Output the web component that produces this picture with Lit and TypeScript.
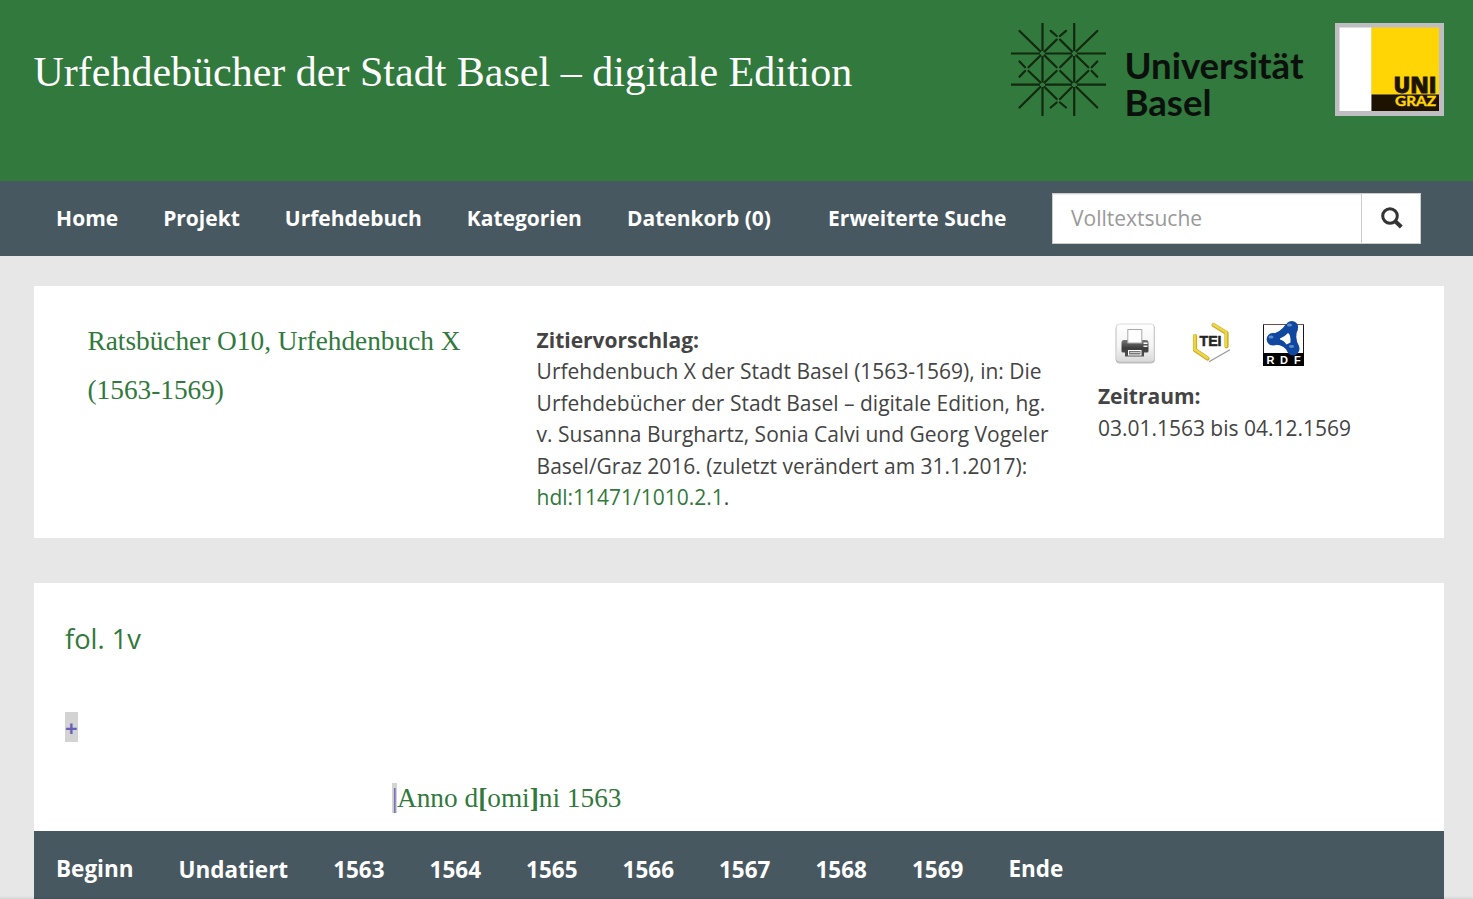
import { LitElement, html, css, svg } from "lit";
import { customElement } from "lit/decorators.js";

const mainNav = ["Home", "Projekt", "Urfehdebuch", "Kategorien", "Datenkorb (0)"];
const years = ["1563", "1564", "1565", "1566", "1567", "1568", "1569"];

@customElement("basel-logo")
class BaselLogo extends LitElement {
  static styles = css`
    :host { display: block; width: 294px; height: 93px; }
    svg { display: block; }
    .word { font: 700 35.500px "Lato", sans-serif; fill: #0b100c; }
  `;
  render() {
    return html`<svg width="294" height="93" viewBox="0 0 294 93">
      <g stroke="#12280f" stroke-width="2.2" fill="none">
        <path d="M31.500 0V28M31.500 33V59.500M31.500 64V93M63.200 0V28M63.200 33V59.500M63.200 64V93" />
        <path d="M0 30.500H29M34 30.500H61M66 30.500H95M0 61.700H29M34 61.700H61M66 61.700H95" />
        <g stroke-linecap="round">
          <path d="M8.500 8L29.300 28.300M86.300 8L65.300 28.300M8.500 84.500L29.300 64M86.300 84.500L65.300 64" />
          <path d="M33.500 28.500L45.700 16.600M49 13L55 7.800M39.700 7.800L45.700 13M49 16.600L61 28.500" />
          <path d="M33.500 64L45.700 76M49 79.500L55 84.500M39.700 84.500L45.700 79.500M49 76L61 64" />
          <path d="M8.500 38.500L14 44.300M17.500 48L29.500 59.500M8.500 53.800L14 48M17.500 44.300L29.500 32.500" />
          <path d="M86.300 38.500L80.700 44.300M77.300 48L65.200 59.500M86.300 53.800L80.700 48M77.300 44.300L65.200 32.500" />
          <path d="M33.500 32.500L45.600 44.300M49.200 48L61 59.500M61 32.500L49.200 44.300M45.600 48L33.500 59.500" />
        </g>
      </g>
      <text class="word" x="113.500" y="55.500" textLength="179" lengthAdjust="spacingAndGlyphs">Universität</text>
      <text class="word" x="113.500" y="92.500" textLength="87" lengthAdjust="spacingAndGlyphs">Basel</text>
    </svg>`;
  }
}

@customElement("graz-logo")
class GrazLogo extends LitElement {
  static styles = css`
    :host { display: block; width: 109px; height: 93px; }
    svg { display: block; }
    .uni { font: 800 23px "Open Sans", sans-serif; fill: #1d1300; stroke: #1d1300; stroke-width: .8; }
    .graz { font: 700 13.500px "Lato", sans-serif; fill: #ffd505; stroke: #ffd505; stroke-width: .4; }
  `;
  render() {
    return html`<svg width="109" height="93" viewBox="0 0 109 93">
      <rect width="109" height="93" fill="#bdbdc2" />
      <rect x="4.500" y="4.500" width="32" height="83.500" fill="#fff" />
      <rect x="36.500" y="4.500" width="67.500" height="67" fill="#ffd505" />
      <rect x="36.500" y="71.500" width="67.500" height="16.500" fill="#1d1300" />
      <text class="uni" x="58.500" y="70" textLength="43" lengthAdjust="spacingAndGlyphs">UNI</text>
      <text class="graz" x="60" y="83" textLength="41" lengthAdjust="spacingAndGlyphs">GRAZ</text>
    </svg>`;
  }
}

const printer = svg`
  <defs>
    <linearGradient id="tile" x1="0" y1="0" x2="0" y2="1"><stop offset="0" stop-color="#fff"/><stop offset=".6" stop-color="#f4f4f4"/><stop offset="1" stop-color="#dadada"/></linearGradient>
    <linearGradient id="body" x1="0" y1="0" x2="0" y2="1"><stop offset="0" stop-color="#777"/><stop offset=".5" stop-color="#3c3c3c"/><stop offset="1" stop-color="#555"/></linearGradient>
  </defs>
  <rect x="1" y="1.500" width="38.500" height="38.500" rx="3.500" fill="#c4c4c4" stroke="#bbb"/>
  <rect x="1.500" y="1" width="37.500" height="37" rx="3" fill="url(#tile)" stroke="#dcdcdc"/>
  <path d="M9 17H31Q33.500 17 33.500 20V28Q33.500 29.500 32 29.500H29V33.500H10V29.500H8Q6.500 29.500 6.500 28V20Q6.500 17 9 17Z" fill="url(#body)"/>
  <rect x="12.800" y="6.500" width="14" height="13.500" fill="#fff" stroke="#aaa"/>
  <rect x="28.500" y="19.500" width="4" height="1.500" fill="#fff"/><rect x="28.500" y="22.500" width="4" height="1.500" fill="#eee"/>
  <rect x="13.500" y="27.500" width="12.500" height="4.500" fill="#777" stroke="#fff"/><path d="M15 29.500H25" stroke="#ccc"/>`;

const tei = svg`
  <g fill="none" stroke-linecap="round" stroke-linejoin="round">
    <path d="M20.500 3L33.500 11V24.500" stroke="#cdae22" stroke-width="4.200"/>
    <path d="M20.300 2.500L33 10.300V24" stroke="#ecd64b" stroke-width="2.400"/>
    <path d="M2 14V28L14.500 36.500" stroke="#cdae22" stroke-width="4.200"/>
    <path d="M1.700 13.500V27.500L14.300 36" stroke="#ecd64b" stroke-width="2.400"/>
    <path d="M16.500 39.500L36.500 28" stroke="#999" stroke-width="1.300"/>
  </g>
  <text class="tei" x="6.500" y="23.500" textLength="22" lengthAdjust="spacingAndGlyphs">TEI</text>`;

const rdf = svg`
  <rect x=".5" y="3.500" width="40" height="41" fill="#fff" stroke="#181818"/>
  <path d="M0 3.500H41" stroke="#754a4a"/>
  <rect y="32" width="41" height="13" fill="#000"/>
  <path d="M8 13Q17 12 23 3L35 8Q31 16 36 25L26 32Q20 22 9 24Z" fill="#1048a0"/>
  <g fill="#1048a0"><circle cx="28.800" cy="6.300" r="6.300"/><circle cx="10" cy="18.300" r="6.300"/><circle cx="30" cy="28" r="6.500"/></g>
  <path d="M17 17.500Q22 15.500 25 12Q28 14 27.500 21.500L23.500 23.500Q21 19.500 17 18.500Z" fill="#fff"/>
  <g fill="#5f8fca"><ellipse cx="26.500" cy="4" rx="2.600" ry="1.600"/><ellipse cx="8" cy="16" rx="2.500" ry="1.600"/><ellipse cx="28.500" cy="25.500" rx="2.600" ry="1.400"/></g>
  <text class="rdf" x="3.500" y="42.500">R</text><text class="rdf" x="17" y="42.500">D</text><text class="rdf" x="31" y="42.500">F</text>`;

@customElement("app-root")
class AppRoot extends LitElement {
  static styles = css`
    :host {
      display: block; position: relative; height: 899px; overflow: hidden; background: #e7e7e7;
      font: 20.990px/31.5px "Open Sans", sans-serif; color: #444;
    }
    * { box-sizing: border-box; }
    a { color: inherit; text-decoration: none; }
    header { height: 181px; background: #31793d; display: flex; align-items: flex-start; padding: 23px 29px 0 33.500px; }
    h1 { margin: 25px auto 0 0; font: 400 42px/48px "Liberation Serif", serif; color: #fff; white-space: nowrap; }
    graz-logo { margin-left: 30px; }
    nav { display: flex; background: #485861; color: #fff; font-weight: 700; white-space: nowrap; }
    .main { height: 75px; padding: 0 52px 0 56.100px; align-items: center; gap: 45px; }
    .extended { margin-left: 12.200px; }
    .search { margin-left: auto; flex: none; display: flex; width: 369px; height: 51px; background: #fff; border: 1px solid #ccc; font-weight: 400; color: #999; }
    .field { flex: 1; padding: 9px 18px; box-shadow: inset 0 1px 1px rgba(0,0,0,.075); }
    .go { width: 59px; border-left: 1px solid #ccc; display: flex; align-items: center; justify-content: center; padding: 0 0 2px 1px; }
    main { padding: 30px 29px 0 34px; }
    section { background: #fff; }
    .info { height: 252px; display: grid; grid-template-columns: 449.100px 561.300px 1fr; padding-left: 53.500px; margin-bottom: 45px; }
    h2 { margin: 31px 0 0; font: 400 27.300px/49px "Liberation Serif", serif; color: #31793d; white-space: nowrap; }
    .cite { padding-top: 38.500px; white-space: nowrap; }
    .green { color: #31793d; }
    .icons { display: flex; height: 45px; margin: 35px 0 15px 17px; }
    .icons svg { display: block; overflow: visible; }
    .print { margin: 2px 37px 0 0; }
    .teiicon { margin: 1px 33px 0 0; }
    .tei { font: 700 14px "Liberation Sans", sans-serif; fill: #252525; stroke: #252525; stroke-width: .5; }
    .rdf { font: 700 11px "Liberation Sans", sans-serif; fill: #fff; }
    .folio { height: 248px; padding: 37px 31px 0; display: flex; flex-direction: column; align-items: flex-start; }
    h3 { margin: 0 0 55px; font-weight: 400; font-size: 27.300px; line-height: 37px; color: #31793d; }
    .mark { background: #d3d3d3; color: #6a5fb8; }
    .cross { font-weight: 700; font-size: 22px; line-height: 30px; width: 13px; height: 30px; }
    .anno { margin: 41px 0 0 327px; font: 27.300px/30px "Liberation Serif", serif; color: #31793d; display: flex; white-space: pre; }
    .bar { width: 5px; overflow: hidden; }
    .years { height: 68px; padding: 23px 22px 0; gap: 45px; font-size: 22.5px; }
    .edge { position: relative; top: -1px; }
    .fade { position: absolute; left: 0; right: 0; bottom: 0; height: 3px; background: linear-gradient(rgba(0,0,0,0), rgba(0,0,0,.08)); }
  `;
  render() {
    return html`
      <header>
        <h1>Urfehdebücher der Stadt Basel – digitale Edition</h1>
        <basel-logo></basel-logo>
        <graz-logo></graz-logo>
      </header>
      <nav class="main">
        ${mainNav.map((t) => html`<a>${t}</a>`)}
        <a class="extended">Erweiterte Suche</a>
        <div class="search">
          <span class="field">Volltextsuche</span>
          <span class="go"><svg width="22" height="22" viewBox="0 0 22 22" fill="none" stroke="#333">
            <circle cx="9" cy="9" r="7.300" stroke-width="3"/><path d="M14 14L20.300 20" stroke-width="4"/>
          </svg></span>
        </div>
      </nav>
      <main>
        <section class="info">
          <h2>Ratsbücher O10, Urfehdenbuch X<br>(1563-1569)</h2>
          <div class="cite"><b>Zitiervorschlag:</b><br>Urfehdenbuch X der Stadt Basel (1563-1569), in: Die<br>Urfehdebücher der Stadt Basel – digitale Edition, hg.<br>v. Susanna Burghartz, Sonia Calvi und Georg Vogeler<br>Basel/Graz 2016. (zuletzt verändert am 31.1.2017):<br><a class="green">hdl:11471/1010.2.1</a>.</div>
          <div>
            <div class="icons">
              <svg class="print" width="41" height="41">${printer}</svg>
              <svg class="teiicon" width="37" height="41">${tei}</svg>
              <svg width="41" height="45">${rdf}</svg>
            </div>
            <b>Zeitraum:</b><br>03.01.1563 bis 04.12.1569
          </div>
        </section>
        <section class="folio">
          <h3>fol. 1v</h3>
          <span class="mark cross">+</span>
          <div class="anno"><span class="mark bar">|</span><span>Anno d<b>[</b>omi<b>]</b>ni 1563</span></div>
        </section>
        <nav class="years">
          <a class="edge">Beginn</a><a>Undatiert</a>
          ${years.map((y) => html`<a>${y}</a>`)}
          <a class="edge">Ende</a>
        </nav>
      </main>
      <div class="fade"></div>`;
  }
}
